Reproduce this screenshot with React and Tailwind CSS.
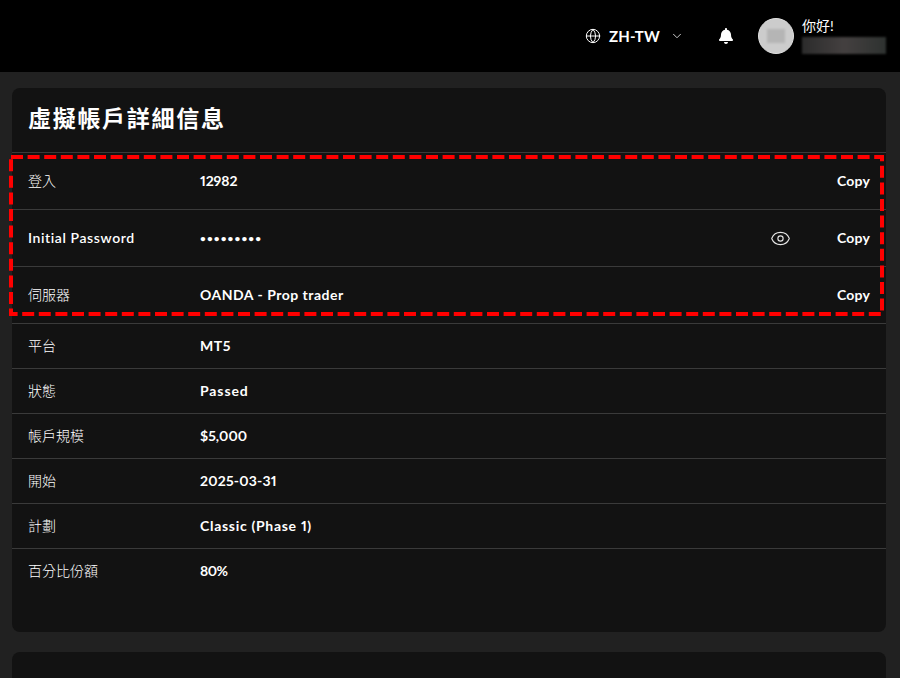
import React from "react";
import { Globe, ChevronDown, Eye } from "lucide-react";
import { FaBell } from "react-icons/fa";

const FONT = "font-['Lato','Noto_Sans_CJK_TC',sans-serif]";

const Row = ({ label, value, h = "h-[45px]", eye, copy, secret, latin, track = "tracking-[0.5px]" }) => (
  <div className={`flex items-center ${h} border-b border-[#3a3a3a] pl-4 pr-4 box-border`}>
    <div className={`w-[172px] shrink-0 text-sm ${latin ? "font-semibold tracking-[0.6px]" : "font-light"} text-white`}>{label}</div>
    <div className={`flex-1 font-bold text-white ${secret ? "text-[10px] tracking-[1.1px]" : `text-sm proportional-nums ${track}`}`}>{value}</div>
    {eye && <Eye className="w-[21px] h-[21px] mr-[46px] text-[#e5e5e5]" strokeWidth={1.3} />}
    {copy && <div className="text-sm font-bold tracking-[0.2px] text-white">Copy</div>}
  </div>
);

export default function App() {
  return (
    <div className={`relative w-[900px] h-[678px] overflow-hidden bg-[#212121] ${FONT}`}>
      {/* top bar */}
      <header className="flex items-center justify-end h-[72px] bg-black pr-3.5">
        <Globe className="w-4 h-4 text-white" strokeWidth={1.5} />
        <span className="ml-2 text-[15px] font-bold tracking-[0.2px] text-white">ZH-TW</span>
        <ChevronDown className="ml-2.5 w-3.5 h-3.5 text-[#cccccc]" strokeWidth={1.7} />
        <FaBell className="ml-[34px] w-4 h-4 text-white" />
        <div className="ml-[24px] flex items-center justify-center w-9 h-9 rounded-full bg-[#cccccc] border border-[#e0e0e0]">
          <div className="w-[18px] h-[14px] bg-[#b5b5b5] blur-[1px]" />
        </div>
        <div className="ml-2 w-[84px]">
          <div className="text-sm leading-4 text-white">你好!</div>
          <div className="mt-[3px] h-[17px] bg-gradient-to-r from-[#2c2c2c] via-[#444040] to-[#2e3230] blur-[1px]" />
        </div>
      </header>

      {/* details card */}
      <main className="mx-3 mr-3.5 mt-4 h-[544px] rounded-lg bg-[#121212] text-white">
        <h1 className="flex items-center h-[65px] pl-4 pb-1 text-[23px] font-bold tracking-[1.7px] border-b border-[#3a3a3a] box-border">
          虛擬帳戶詳細信息
        </h1>
        <Row label="登入" value="12982" h="h-[57px]" copy track="tracking-[-0.1px]" />
        <Row label="Initial Password" value="•••••••••" h="h-[57px]" eye copy secret latin />
        <Row label="伺服器" value="OANDA - Prop trader" h="h-[57px]" copy />
        <Row label="平台" value="MT5" />
        <Row label="狀態" value="Passed" track="tracking-[0.9px]" />
        <Row label="帳戶規模" value="$5,000" track="tracking-[0px]" />
        <Row label="開始" value="2025-03-31" track="tracking-[0.2px]" />
        <Row label="計劃" value="Classic (Phase 1)" track="tracking-[0.7px]" />
        <div className="flex items-center h-[45px] pl-4 pb-0.5">
          <div className="w-[172px] shrink-0 text-sm font-light text-white">百分比份額</div>
          <div className="text-sm font-bold proportional-nums tracking-[-0.5px]">80%</div>
        </div>
      </main>

      {/* next card, cut off by the window */}
      <div className="mx-3 mr-3.5 mt-5 h-[60px] rounded-lg bg-[#121212]" />

      {/* red annotation box */}
      <svg className="absolute left-[9px] top-[155px]" width="875" height="161" fill="none">
        <rect x="2" y="2" width="871" height="157" stroke="#ff0000" strokeWidth="4" strokeDasharray="12 4.6" />
      </svg>
    </div>
  );
}
